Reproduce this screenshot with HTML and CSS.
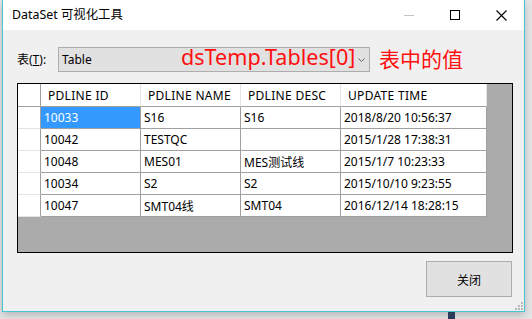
FILE: index.html
```html
<!DOCTYPE html>
<html lang="zh">
<head>
<meta charset="utf-8">
<title>DataSet 可视化工具</title>
<link rel="stylesheet" href="styles.css">
</head>
<body>
<div class="desk">
  <div class="window">
    <div class="titlebar">
      <div class="title">DataSet 可视化工具</div>
      <div class="caps">
        <div class="cap"><svg width="10" height="10" viewBox="0 0 10 10"><rect x="0" y="5" width="10" height="1" fill="#c4c4c4"/></svg></div>
        <div class="cap"><svg width="10" height="10" viewBox="0 0 10 10"><rect x="0.5" y="0.5" width="9" height="9" fill="none" stroke="#000" stroke-width="1"/></svg></div>
        <div class="cap"><svg width="11" height="11" viewBox="0 0 11 11"><path d="M0.5 0.5 L10.5 10.5 M10.5 0.5 L0.5 10.5" stroke="#000" stroke-width="1.1" fill="none"/></svg></div>
      </div>
    </div>
    <div class="client">
      <div class="toolbar">
        <label class="lbl">表(<u>T</u>):</label>
        <div class="combo">
          <span class="combo-text">Table</span>
          <svg class="chev" width="7" height="5" viewBox="0 0 7 5"><path d="M0.5 0.5 L3.5 3.5 L6.5 0.5" stroke="#606060" stroke-width="1" fill="none"/></svg>
          <span class="overlay">dsTemp.Tables[0]</span>
        </div>
        <span class="note">表中的值</span>
      </div>
      <div class="gridbox">
        <div class="grid">
          <div class="corner"></div>
          <div class="hd">PDLINE ID</div>
          <div class="hd">PDLINE NAME</div>
          <div class="hd">PDLINE DESC</div>
          <div class="hd">UPDATE TIME</div>

          <div class="rh"></div>
          <div class="cell sel">10033</div>
          <div class="cell">S16</div>
          <div class="cell">S16</div>
          <div class="cell">2018/8/20 10:56:37</div>

          <div class="rh"></div>
          <div class="cell">10042</div>
          <div class="cell">TESTQC</div>
          <div class="cell"></div>
          <div class="cell">2015/1/28 17:38:31</div>

          <div class="rh"></div>
          <div class="cell">10048</div>
          <div class="cell">MES01</div>
          <div class="cell">MES测试线</div>
          <div class="cell">2015/1/7 10:23:33</div>

          <div class="rh"></div>
          <div class="cell">10034</div>
          <div class="cell">S2</div>
          <div class="cell">S2</div>
          <div class="cell">2015/10/10 9:23:55</div>

          <div class="rh"></div>
          <div class="cell">10047</div>
          <div class="cell">SMT04线</div>
          <div class="cell">SMT04</div>
          <div class="cell">2016/12/14 18:28:15</div>
        </div>
      </div>
      <div class="actions">
        <button class="btn">关闭</button>
      </div>
      <svg class="grip" width="9" height="9" viewBox="0 0 9 9">
        <rect x="7" y="1" width="2" height="2" fill="#b8b8b8"/>
        <rect x="4" y="4" width="2" height="2" fill="#b8b8b8"/>
        <rect x="7" y="4" width="2" height="2" fill="#b8b8b8"/>
        <rect x="1" y="7" width="2" height="2" fill="#b8b8b8"/>
        <rect x="4" y="7" width="2" height="2" fill="#b8b8b8"/>
        <rect x="7" y="7" width="2" height="2" fill="#b8b8b8"/>
      </svg>
    </div>
  </div>
  <div class="taskblock"></div>
</div>
</body>
</html>
```
FILE: styles.css
```css
* { box-sizing: border-box; }

html, body {
  margin: 0;
  padding: 0;
  background: #e4e4e4;
  width: 532px;
  height: 319px;
  overflow: hidden;
  font-family: "Noto Sans", "Noto Sans CJK SC", sans-serif;
  font-size: 12px;
  color: #000;
}

.desk {
  position: relative;
  width: 532px;
  height: 319px;
  padding-left: 2px;
  background: #e6e6e6;
}

.window {
  position: relative;
  width: 523px;
  height: 312px;
  border: 1px solid #45c4d6;
  border-top: none;
  display: flex;
  flex-direction: column;
  box-shadow: 0 3px 8px rgba(0, 0, 0, 0.22);
  background: #f0f0f0;
}

.titlebar {
  height: 30px;
  background: #fff;
  display: flex;
  align-items: center;
  flex: none;
}

.title {
  padding-left: 9px;
  font-size: 12.4px;
  line-height: 30px;
}

.caps {
  margin-left: auto;
  display: flex;
  height: 30px;
}

.cap {
  width: 46px;
  height: 30px;
  display: flex;
  align-items: center;
  justify-content: center;
}

.client {
  flex: 1;
  background: #f0f0f0;
  padding: 17px 10px 0 14px;
  display: flex;
  flex-direction: column;
}

.toolbar {
  display: flex;
  align-items: center;
  height: 25px;
}

.lbl {
  width: 41px;
  font-size: 12px;
  margin-top: -2px;
}

.lbl u {
  text-decoration: underline;
  text-underline-offset: 1px;
}

.combo {
  position: relative;
  width: 312px;
  height: 25px;
  border: 1px solid #adadad;
  background: #e1e1e1;
  display: flex;
  align-items: center;
  padding-left: 3px;
}

.combo-text {
  font-size: 12px;
}

.chev {
  position: absolute;
  right: 4px;
  top: 10px;
}

.overlay {
  position: absolute;
  left: 122px;
  top: -2px;
  font-size: 21.6px;
  line-height: 21px;
  color: #ff1010;
  white-space: nowrap;
}

.note {
  margin-left: 9px;
  font-family: "Noto Sans CJK SC", sans-serif;
  font-size: 21px;
  line-height: 25px;
  color: #ff1010;
  margin-bottom: 3px;
}

.gridbox {
  margin-top: 11px;
  width: 496px;
  height: 170px;
  border: 1px solid #000;
  background: #ababab;
}

.grid {
  display: grid;
  grid-template-columns: 23px 100px 100px 100px 146px;
  grid-template-rows: 23px repeat(5, 22px);
  width: 469px;
}

.grid > div {
  display: flex;
  align-items: center;
  white-space: nowrap;
  overflow: hidden;
  font-size: 12px;
  background: #fff;
}

.corner {
  border-right: 1px solid #a0a0a0;
  border-bottom: 1px solid #a0a0a0;
}

.hd {
  padding-left: 7px;
  border-right: 1px solid #e4e4e4;
  border-bottom: 1px solid #a0a0a0;
  letter-spacing: 0.3px;
}

.rh {
  border-right: 1px solid #a0a0a0;
  border-bottom: 1px solid #e4e4e4;
}

.cell {
  padding-left: 3px;
  border-right: 1px solid #a0a0a0;
  border-bottom: 1px solid #a0a0a0;
}

.grid > .sel {
  background: #3399ff;
  color: #fff;
}

.actions {
  display: flex;
  justify-content: flex-end;
  margin-top: 8px;
}

.btn {
  width: 86px;
  height: 36px;
  margin-right: 2px;
  border: 1px solid #adadad;
  background: #e1e1e1;
  font-family: "Noto Sans CJK SC", sans-serif;
  font-size: 12px;
  color: #000;
  padding: 0;
}

.grip {
  position: absolute;
  right: 1px;
  bottom: 1px;
}

.taskblock {
  position: absolute;
  left: 448px;
  top: 312px;
  width: 7px;
  height: 7px;
  background: #2b3a58;
}
```
